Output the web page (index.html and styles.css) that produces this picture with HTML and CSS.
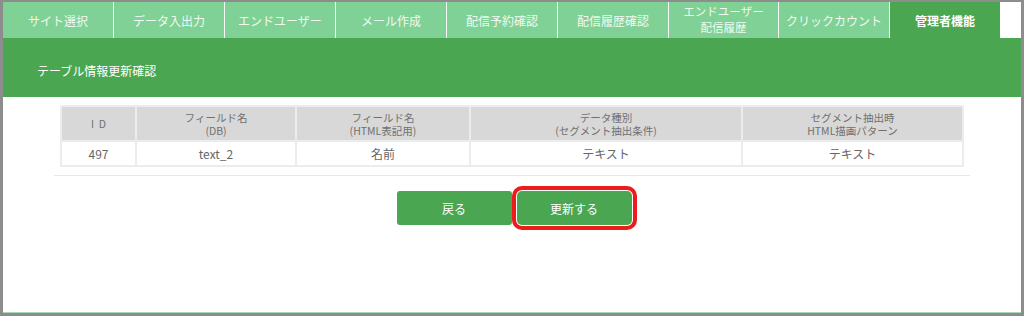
FILE: index.html
```html
<!DOCTYPE html>
<html lang="ja">
<head>
  <meta charset="UTF-8" />
  <meta name="viewport" content="width=device-width, initial-scale=1.0" />
  <title>テーブル情報更新確認</title>
  <link rel="stylesheet" href="styles.css">
</head>
<body>
  <div class="screen">
    <nav class="tabs">
      <a href="#">サイト選択</a>
      <a href="#">データ入出力</a>
      <a href="#">エンドユーザー</a>
      <a href="#">メール作成</a>
      <a href="#">配信予約確認</a>
      <a href="#">配信履歴確認</a>
      <a href="#" class="two-line">エンドユーザー<br>配信履歴</a>
      <a href="#">クリックカウント</a>
      <a href="#" class="active">管理者機能</a>
    </nav>

    <header class="page-title">
      <h1>テーブル情報更新確認</h1>
    </header>

    <main class="content">
      <table class="field-table">
        <thead>
          <tr>
            <th class="col-id">I&nbsp;&nbsp;D</th>
            <th class="col-db">フィールド名<br>(DB)</th>
            <th class="col-html">フィールド名<br>(HTML表記用)</th>
            <th class="col-type">データ種別<br>(セグメント抽出条件)</th>
            <th class="col-pattern">セグメント抽出時<br>HTML描画パターン</th>
          </tr>
        </thead>
        <tbody>
          <tr>
            <td>497</td>
            <td>text_2</td>
            <td>名前</td>
            <td>テキスト</td>
            <td>テキスト</td>
          </tr>
        </tbody>
      </table>

      <hr class="divider">

      <div class="actions">
        <button type="button" class="btn">戻る</button>
        <button type="submit" class="btn btn-marked">更新する</button>
      </div>
    </main>

    <div class="bottom-line"></div>
  </div>
</body>
</html>
```

FILE: styles.css
```css
html, body {
  margin: 0;
  padding: 0;
  background: #fff;
}
body {
  font-family: "Noto Sans CJK JP", "Noto Sans", sans-serif;
  color: #666;
}
.screen {
  width: 1024px;
  height: 316px;
  box-sizing: border-box;
  border-style: solid;
  border-color: #8d8d8d;
  border-width: 2px 3px 3px 3px;
  display: flex;
  flex-direction: column;
  overflow: hidden;
}
.tabs {
  display: flex;
  height: 36px;
  flex-shrink: 0;
}
.tabs a {
  width: 110px;
  border-right: 1px solid #f4fbf5;
  background: #80d195;
  color: #f1f9f2;
  font-size: 12px;
  line-height: 15px;
  text-decoration: none;
  display: flex;
  align-items: center;
  justify-content: center;
  text-align: center;
}
.tabs a.two-line {
  font-size: 11.5px;
  line-height: 16px;
  padding-bottom: 2px;
  box-sizing: border-box;
}
.tabs a.active {
  background: #4aa651;
  color: #fff;
  font-weight: bold;
  border-right: none;
}
.page-title {
  background: #4aa651;
  height: 59px;
  flex-shrink: 0;
  padding: 24px 34px 0;
  box-sizing: border-box;
}
.page-title h1 {
  margin: 0;
  color: #fff;
  font-size: 12px;
  font-weight: normal;
  line-height: 18px;
}
.content {
  flex: 1;
  padding-top: 8px;
}
.field-table {
  width: 904px;
  margin: 0 auto;
  border-collapse: collapse;
  table-layout: fixed;
  font-size: 12px;
  text-align: center;
}
.field-table th {
  background: #d8d8d8;
  color: #707070;
  font-size: 10.5px;
  font-weight: normal;
  line-height: 13px;
  height: 33px;
  padding: 0;
  border: 2px solid #ececec;
}
.field-table td {
  height: 23px;
  padding: 0;
  color: #666;
  border: 2px solid #ececec;
}
.col-id { width: 73px; }
.col-db { width: 158px; }
.col-html { width: 172px; }
.col-type { width: 270px; }
.divider {
  width: 916px;
  margin: 8px auto 0;
  border: none;
  border-top: 1px solid #e8e8e8;
}
.actions {
  display: flex;
  justify-content: center;
  gap: 5px;
  margin-top: 15px;
  padding-left: 4px;
}
.btn {
  width: 115px;
  height: 34px;
  border: none;
  border-radius: 3px;
  background: #4aa651;
  color: #fff;
  font-family: inherit;
  font-size: 12px;
  cursor: pointer;
}
.btn-marked {
  outline: 4px solid #ec1c1c;
  outline-offset: 1px;
  border-radius: 5px;
}
.bottom-line {
  height: 1px;
  background: #a9d9b2;
  flex-shrink: 0;
}
```
